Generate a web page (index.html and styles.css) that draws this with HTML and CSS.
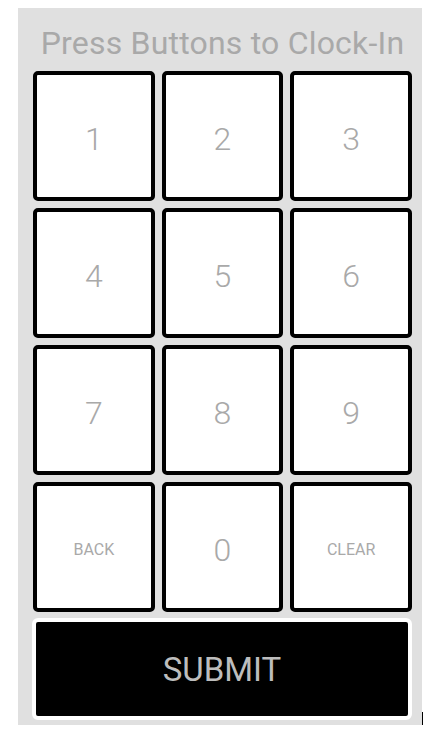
FILE: index.html
```html
<!DOCTYPE html>
<html lang="en">
<head>
  <meta charset="UTF-8">
  <meta name="viewport" content="width=device-width, initial-scale=1.0">
  <title>Clock-In</title>
  <link rel="stylesheet" href="styles.css">
</head>
<body>
  <div class="clock">
    <h1 class="prompt">Press Buttons to Clock-In</h1>
    <div class="keypad">
      <button class="key">1</button>
      <button class="key">2</button>
      <button class="key">3</button>

      <button class="key">4</button>
      <button class="key">5</button>
      <button class="key">6</button>

      <button class="key">7</button>
      <button class="key">8</button>
      <button class="key">9</button>

      <button class="key small">BACK</button>
      <button class="key">0</button>
      <button class="key small">CLEAR</button>
    </div>
    <button class="submit">SUBMIT</button>
  </div>
  <span class="caret"></span>
</body>
</html>
```

FILE: styles.css
```css
body {
  font-family: 'Roboto', 'Liberation Sans', sans-serif;
  margin: 0;
  padding: 8px 0 0 18px;
  background-color: #fff;
  display: flex;
  align-items: flex-end;
}

.clock {
  width: 404px;
  box-sizing: border-box;
  padding: 16px 10px 5px 15px;
  background-color: #e0e0e0;
}

.prompt {
  margin: 0 0 9px 0;
  font-size: 32px;
  font-weight: 400;
  line-height: 38px;
  letter-spacing: 0.2px;
  color: #a9a9a9;
  text-align: center;
  white-space: nowrap;
}

.keypad {
  display: grid;
  grid-template-columns: repeat(3, 1fr);
  grid-auto-rows: 130px;
  gap: 7px;
}

.key {
  font-family: inherit;
  font-size: 32px;
  font-weight: 300;
  color: #a9a9a9;
  background-color: #fff;
  border: 4px solid #000;
  border-radius: 5px;
  padding: 5px 0 0 0;
  cursor: pointer;
}

.key.small {
  font-size: 16px;
  font-weight: 400;
}

.submit {
  display: block;
  width: 380px;
  height: 102px;
  margin: 6px 0 0 -1px;
  font-family: inherit;
  font-size: 33px;
  font-weight: 400;
  color: #bdbdbd;
  background-color: #000;
  border: 4px solid #fff;
  border-radius: 6px;
  cursor: pointer;
}

.caret {
  width: 1px;
  height: 13px;
  background-color: #000;
}
```
